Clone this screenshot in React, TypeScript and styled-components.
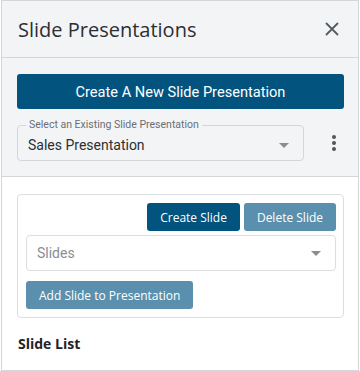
import React from "react";
import styled, { createGlobalStyle } from "styled-components";

const Global = createGlobalStyle`
  html, body { margin: 0; padding: 0; background: #ffffff; }
  * { box-sizing: border-box; }
`;

const Panel = styled.div`
  width: 358px;
  height: 371px;
  margin-left: 1px;
  border: 1px solid #d4d6d9;
  display: flex;
  flex-direction: column;
  background: #ffffff;
  font-family: "Open Sans", sans-serif;
`;

const Header = styled.div`
  height: 57px;
  flex: none;
  background: #f3f4f6;
  border-bottom: 1px solid #d4d6d9;
  display: flex;
  align-items: center;
  justify-content: space-between;
  padding: 0 19px 0 16px;
`;

const Title = styled.h1`
  margin: 0;
  font-family: "Open Sans", sans-serif;
  font-weight: 400;
  font-size: 20px;
  color: #2b2f33;
`;

const IconButton = styled.button`
  border: none;
  background: transparent;
  padding: 0;
  display: flex;
  align-items: center;
  justify-content: center;
  cursor: pointer;
`;

const TopSection = styled.div`
  flex: none;
  background: #f3f4f6;
  border-bottom: 1px solid #d4d6d9;
  padding: 16px 14px 15px 15px;
  display: flex;
  flex-direction: column;
  gap: 16px;
`;

const PrimaryWide = styled.button`
  height: 35px;
  border: none;
  border-radius: 3px;
  background: #02547f;
  color: #ffffff;
  font-family: Roboto, sans-serif;
  font-size: 14.6px;
  width: 100%;
`;

const SelectRow = styled.div`
  display: flex;
  align-items: center;
`;

const OutlinedSelect = styled.div`
  position: relative;
  width: 287px;
  height: 36px;
  border: 1px solid #d4d6d9;
  border-radius: 4px;
  display: flex;
  align-items: center;
  padding: 4px 14px 0 10px;
`;

const FloatLabel = styled.span`
  position: absolute;
  top: -8px;
  left: 8px;
  padding: 0 3px;
  background: #f3f4f6;
  font-family: Roboto, sans-serif;
  font-size: 10.5px;
  color: #6b6f73;
  line-height: 14px;
`;

const SelectValue = styled.span<{ $placeholder?: boolean }>`
  flex: 1;
  font-family: Roboto, sans-serif;
  font-size: 14px;
  color: ${(p) => (p.$placeholder ? "#8a8e92" : "#2b2f33")};
`;

const Caret = styled.span`
  width: 0;
  height: 0;
  border-left: 5px solid transparent;
  border-right: 5px solid transparent;
  border-top: 5px solid #8a8c8f;
`;

const Kebab = styled.div`
  margin-left: auto;
  margin-right: 8px;
  display: flex;
  flex-direction: column;
  align-items: center;
  gap: 2px;
`;

const Dot = styled.span`
  width: 4px;
  height: 4px;
  border-radius: 50%;
  background: #4f565c;
`;

const Body = styled.div`
  flex: 1;
  padding: 17px 14px 0 15px;
  display: flex;
  flex-direction: column;
`;

const Card = styled.div`
  border: 1px solid #dcdee0;
  border-radius: 4px;
  padding: 8px 7px 8px 8px;
  display: flex;
  flex-direction: column;
  gap: 4px;
`;

const ButtonRow = styled.div`
  display: flex;
  justify-content: flex-end;
  gap: 4px;
`;

const SmallButton = styled.button<{ $muted?: boolean }>`
  height: 28px;
  border: none;
  border-radius: 3px;
  padding: 0 13px;
  background: ${(p) => (p.$muted ? "#5a90ae" : "#02547f")};
  color: #ffffff;
  font-family: "Open Sans", sans-serif;
  font-weight: 500;
  font-size: 12px;
`;

const CardSelect = styled.div`
  height: 36px;
  border: 1px solid #dcdee0;
  border-radius: 4px;
  display: flex;
  align-items: center;
  padding: 0 14px 0 10px;
`;

const AddRow = styled.div`
  padding-top: 6px;
  display: flex;
`;

const SectionTitle = styled.h2`
  margin: 16px 0 0 1px;
  font-family: "Open Sans", sans-serif;
  font-weight: 700;
  font-size: 14px;
  color: #1f2326;
`;

export default function App() {
  return (
    <>
      <Global />
      <Panel>
        <Header>
          <Title>Slide Presentations</Title>
          <IconButton aria-label="Close">
            <svg width="14" height="14" viewBox="0 0 14 14">
              <path d="M1 1 L13 13 M13 1 L1 13" stroke="#555b61" strokeWidth="1.8" />
            </svg>
          </IconButton>
        </Header>
        <TopSection>
          <PrimaryWide>Create A New Slide Presentation</PrimaryWide>
          <SelectRow>
            <OutlinedSelect>
              <FloatLabel>Select an Existing Slide Presentation</FloatLabel>
              <SelectValue>Sales Presentation</SelectValue>
              <Caret />
            </OutlinedSelect>
            <Kebab>
              <Dot />
              <Dot />
              <Dot />
            </Kebab>
          </SelectRow>
        </TopSection>
        <Body>
          <Card>
            <ButtonRow>
              <SmallButton>Create Slide</SmallButton>
              <SmallButton $muted>Delete Slide</SmallButton>
            </ButtonRow>
            <CardSelect>
              <SelectValue $placeholder>Slides</SelectValue>
              <Caret />
            </CardSelect>
            <AddRow>
              <SmallButton $muted>Add Slide to Presentation</SmallButton>
            </AddRow>
          </Card>
          <SectionTitle>Slide List</SectionTitle>
        </Body>
      </Panel>
    </>
  );
}
